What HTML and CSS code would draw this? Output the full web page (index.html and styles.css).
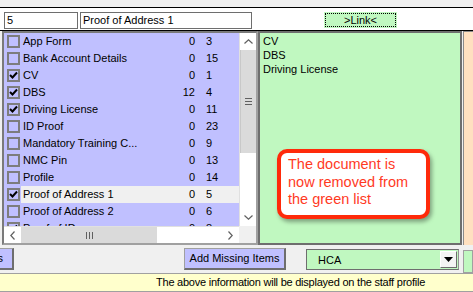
FILE: index.html
```html
<!DOCTYPE html>
<html>
<head>
<meta charset="utf-8">
<link rel="stylesheet" href="styles.css">
</head>
<body>
<div class="topband"></div>
<div class="toolbar">
  <div class="field f-id">5</div>
  <div class="field f-name">Proof of Address 1</div>
  <div class="link-btn"><span class="focus">&gt;Link&lt;</span></div>
</div>
<div class="main">
  <div class="list">
    <div class="rows">
      <div class="row"><div class="chk"><span class="box"></span></div><div class="cells"><span class="name">App Form</span><span class="c1">0</span><span class="c2">3</span></div></div>
      <div class="row"><div class="chk"><span class="box"></span></div><div class="cells"><span class="name">Bank Account Details</span><span class="c1">0</span><span class="c2">15</span></div></div>
      <div class="row"><div class="chk"><span class="box on"><svg viewBox="0 0 9 9" width="9" height="9"><polyline points="1,4 3.5,6.5 8,1.5" fill="none" stroke="#000" stroke-width="2"/></svg></span></div><div class="cells"><span class="name">CV</span><span class="c1">0</span><span class="c2">1</span></div></div>
      <div class="row"><div class="chk"><span class="box on"><svg viewBox="0 0 9 9" width="9" height="9"><polyline points="1,4 3.5,6.5 8,1.5" fill="none" stroke="#000" stroke-width="2"/></svg></span></div><div class="cells"><span class="name">DBS</span><span class="c1">12</span><span class="c2">4</span></div></div>
      <div class="row"><div class="chk"><span class="box on"><svg viewBox="0 0 9 9" width="9" height="9"><polyline points="1,4 3.5,6.5 8,1.5" fill="none" stroke="#000" stroke-width="2"/></svg></span></div><div class="cells"><span class="name">Driving License</span><span class="c1">0</span><span class="c2">11</span></div></div>
      <div class="row"><div class="chk"><span class="box"></span></div><div class="cells"><span class="name">ID Proof</span><span class="c1">0</span><span class="c2">23</span></div></div>
      <div class="row"><div class="chk"><span class="box"></span></div><div class="cells"><span class="name">Mandatory Training C...</span><span class="c1">0</span><span class="c2">9</span></div></div>
      <div class="row"><div class="chk"><span class="box"></span></div><div class="cells"><span class="name">NMC Pin</span><span class="c1">0</span><span class="c2">13</span></div></div>
      <div class="row"><div class="chk"><span class="box"></span></div><div class="cells"><span class="name">Profile</span><span class="c1">0</span><span class="c2">14</span></div></div>
      <div class="row"><div class="chk"><span class="box on"><svg viewBox="0 0 9 9" width="9" height="9"><polyline points="1,4 3.5,6.5 8,1.5" fill="none" stroke="#000" stroke-width="2"/></svg></span></div><div class="cells sel"><span class="name">Proof of Address 1</span><span class="c1">0</span><span class="c2">5</span></div></div>
      <div class="row"><div class="chk"><span class="box"></span></div><div class="cells"><span class="name">Proof of Address 2</span><span class="c1">0</span><span class="c2">6</span></div></div>
      <div class="row"><div class="chk"><span class="box on"><svg viewBox="0 0 9 9" width="9" height="9"><polyline points="1,4 3.5,6.5 8,1.5" fill="none" stroke="#000" stroke-width="2"/></svg></span></div><div class="cells"><span class="name">Proof of ID</span><span class="c1">0</span><span class="c2">8</span></div></div>
    </div>
    <div class="vscroll">
      <div class="sbtn"><svg width="9" height="5" viewBox="0 0 9 5"><polyline points="0.5,4.5 4.5,0.8 8.5,4.5" fill="none" stroke="#606060" stroke-width="1.2"/></svg></div>
      <div class="vthumb"><span class="hgrip"></span><span class="hgrip"></span><span class="hgrip"></span></div>
      <div class="vtrack"></div>
      <div class="sbtn"><svg width="9" height="5" viewBox="0 0 9 5"><polyline points="0.5,0.5 4.5,4.2 8.5,0.5" fill="none" stroke="#606060" stroke-width="1.2"/></svg></div>
    </div>
    <div class="hscroll">
      <div class="sbtn"><svg width="5" height="9" viewBox="0 0 5 9"><polyline points="4.5,0.5 0.8,4.5 4.5,8.5" fill="none" stroke="#606060" stroke-width="1.2"/></svg></div>
      <div class="hthumb"><span class="vgrip"></span><span class="vgrip"></span><span class="vgrip"></span></div>
      <div class="htrack"></div>
      <div class="sbtn"><svg width="5" height="9" viewBox="0 0 5 9"><polyline points="0.5,0.5 4.2,4.5 0.5,8.5" fill="none" stroke="#606060" stroke-width="1.2"/></svg></div>
    </div>
    <div class="corner"></div>
  </div>
  <div class="green">
    <div>CV</div>
    <div>DBS</div>
    <div>Driving License</div>
  </div>
  <div class="peach"></div>
  <div class="callout">The document is<br>now removed from<br>the green list</div>
</div>
<div class="actions">
  <div class="btn btn-cut">Items</div>
  <div class="btn btn-add">Add Missing Items</div>
  <div class="combo"><span class="combo-text">HCA</span><span class="drop"><svg width="9" height="5" viewBox="0 0 9 5"><polygon points="0,0 9,0 4.5,5" fill="#000"/></svg></span></div>
  <div class="stub"></div>
</div>
<div class="note">The above information will be displayed on the staff profile</div>
</body>
</html>
```
FILE: styles.css
```css
* { box-sizing: border-box; }
html, body { margin: 0; padding: 0; }
body {
  width: 473px;
  height: 292px;
  overflow: hidden;
  background: #f0f0f0;
  font-family: "Liberation Sans", Arial, sans-serif;
  font-size: 11px;
  color: #000;
}
.topband { height: 7px; background: #f0f0f0; }
.toolbar {
  height: 24px;
  background: #fff;
  border-top: 1px solid #000;
  border-bottom: 1px solid #000;
  display: flex;
  align-items: flex-start;
  padding-top: 4px;
  padding-left: 4px;
}
.field {
  height: 17px;
  border: 1px solid #6e6e6e;
  line-height: 15px;
  padding-left: 2px;
  background: #fff;
}
.f-id { width: 74px; }
.f-name { width: 172px; margin-left: 2px; }
.link-btn {
  margin-left: 72px;
  width: 73px;
  height: 16px;
  background: #c0f8c0;
  padding: 1px;
}
.focus {
  display: block;
  height: 14px;
  border: 1px dotted #000;
  text-align: center;
  line-height: 12px;
}
.main {
  position: relative;
  height: 214px;
  display: flex;
  padding-left: 2px;
}
.list {
  width: 256px;
  height: 214px;
  border: 2px solid #7a7a7a;
  border-right-color: #a0a0a0;
  border-bottom-color: #a0a0a0;
  display: grid;
  grid-template-columns: 235px 17px;
  grid-template-rows: 193px 17px;
  background: #c0c0ff;
}
.rows { overflow: hidden; background: #c0c0ff; }
.row { display: flex; height: 17px; }
.chk { width: 17px; padding-left: 3px; padding-top: 2px; }
.box {
  display: block;
  width: 13px;
  height: 13px;
  border: 2px solid #7d7d7d;
  background: #c0c0ff;
}
.box svg { display: block; margin: 0; }
.cells { flex: 1; display: flex; line-height: 17px; }
.cells.sel { background: #f0f0f0; }
.name { flex: 1; padding-left: 2px; white-space: nowrap; }
.c1 { width: 20px; text-align: right; }
.c2 { width: 44px; padding-left: 11px; }
.vscroll {
  display: flex;
  flex-direction: column;
  background: #fff;
  border-left: 1px solid #e0e0e0;
}
.sbtn {
  height: 17px;
  flex: 0 0 17px;
  display: flex;
  align-items: center;
  justify-content: center;
  background: #fff;
}
.vthumb {
  height: 103px;
  background: #dadada;
  display: flex;
  flex-direction: column;
  align-items: center;
  justify-content: center;
  gap: 1px;
  border-left: 1px solid #c8c8c8;
}
.hgrip { display: block; width: 7px; height: 1px; background: #606060; margin: 0.5px 0; }
.vtrack { flex: 1; background: #fff; }
.hscroll { display: flex; background: #fff; border-top: 1px solid #e0e0e0; }
.hscroll .sbtn { width: 17px; height: auto; }
.hthumb {
  width: 136px;
  background: #dadada;
  display: flex;
  align-items: center;
  justify-content: center;
  gap: 2px;
}
.vgrip { display: block; width: 1px; height: 7px; background: #606060; }
.htrack { flex: 1; background: #fff; }
.corner { background: #f0f0f0; }
.green {
  width: 204px;
  height: 214px;
  background: #c0f8c0;
  border: 2px solid #6e6e6e;
  padding: 1px 3px;
  line-height: 14px;
}
.peach {
  flex: 1;
  height: 214px;
  margin-left: 1px;
  background: #ffe0c0;
  border-left: 1px solid #8a8a8a;
  border-top: 1px solid #8a8a8a;
}
.callout {
  position: absolute;
  left: 277px;
  top: 118px;
  width: 153px;
  height: 70px;
  border: 4px solid #ff2a0a;
  border-radius: 10px;
  background: #fff;
  box-shadow: 2px 3px 4px rgba(0,0,0,0.35);
  color: #ff3a1f;
  font-family: "Liberation Sans", Arial, sans-serif;
  font-size: 14.5px;
  line-height: 17.5px;
  padding: 3px 4px 0 7px;
  white-space: nowrap;
}
.actions {
  height: 28px;
  display: flex;
  align-items: flex-start;
  padding-top: 3px;
}
.btn {
  height: 22px;
  background: #c0c0ff;
  border: 1px solid #a0a0a0;
  border-right: 2px solid #6e6e6e;
  border-bottom: 2px solid #6e6e6e;
  line-height: 19px;
  white-space: nowrap;
}
.btn-cut { width: 60px; margin-left: -46px; text-align: right; padding-right: 9px; }
.btn-add { width: 102px; margin-left: 170px; text-align: center; }
.combo {
  width: 153px;
  height: 21px;
  margin-left: 20px;
  margin-top: 1px;
  background: #c0f8c0;
  border: 1px solid #6e6e6e;
  border-right-color: #909090;
  display: flex;
  align-items: center;
  padding: 1px;
}
.combo-text { flex: 1; padding-left: 10px; }
.drop {
  width: 17px;
  height: 17px;
  background: #f4f4f4;
  border: 1px solid #fff;
  border-right-color: #6e6e6e;
  border-bottom-color: #6e6e6e;
  display: flex;
  align-items: center;
  justify-content: center;
}
.stub {
  flex: 1;
  height: 23px;
  margin-left: 4px;
  margin-top: 2px;
  background: #c0f8c0;
  border: 1px solid #a0a0a0;
}
.note {
  height: 19px;
  background: #ffffcc;
  border-top: 1px solid #a0a0a0;
  border-bottom: 1px solid #a0a0a0;
  padding-left: 156px;
  line-height: 16px;
  white-space: nowrap;
  letter-spacing: -0.23px;
}
```
